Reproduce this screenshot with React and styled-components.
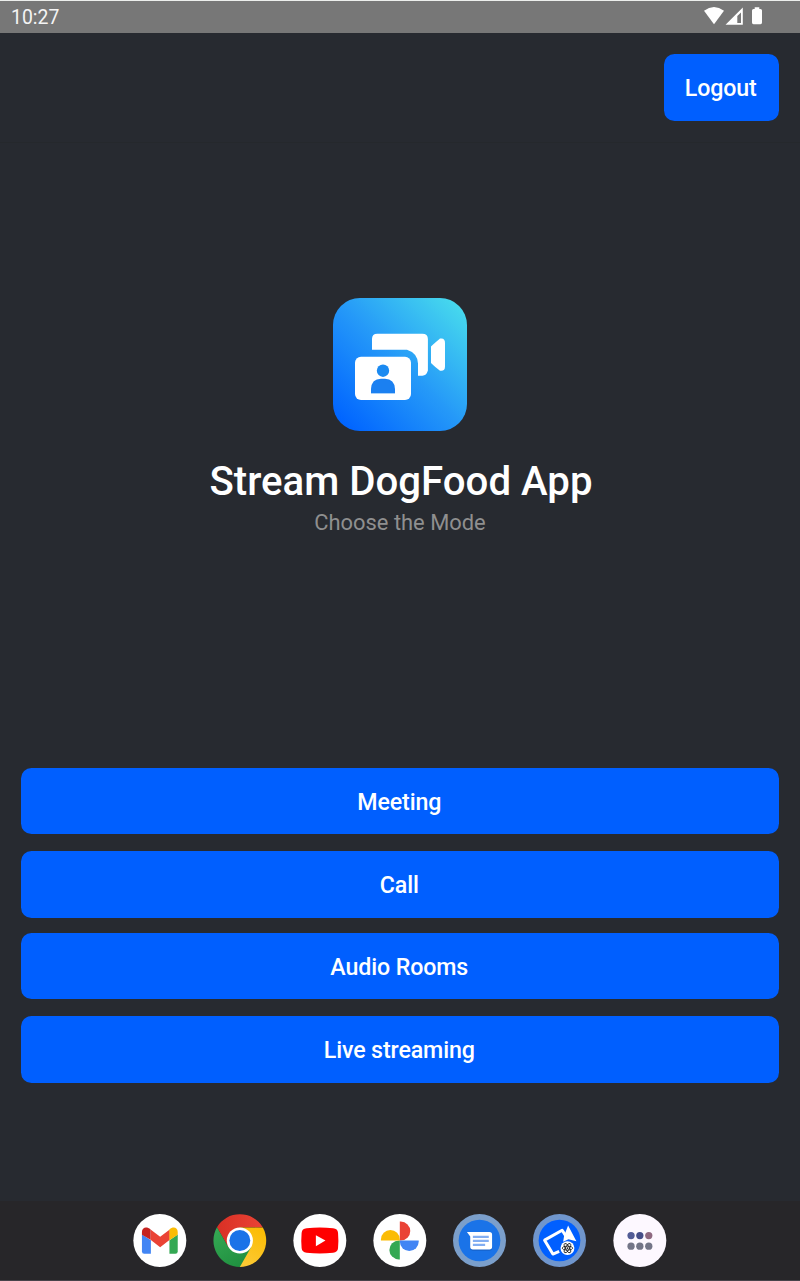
import React from "react";
import styled, { createGlobalStyle } from "styled-components";

const GlobalStyle = createGlobalStyle`
  * { box-sizing: border-box; }
  body { margin: 0; background: #272a30; font-family: Roboto, "Liberation Sans", sans-serif; }
`;

const Screen = styled.div`
  display: flex;
  flex-direction: column;
  width: 800px;
  height: 1281px;
  background: #272a30;
  color: #fff;
  overflow: hidden;
`;

const StatusBar = styled.div`
  display: flex;
  justify-content: space-between;
  flex: none;
  height: 33px;
  border-top: 1px solid #eceeec;
  padding: 0 36px 0 11px;
  background: #777;
`;

const Clock = styled.span`
  font-size: 19.4px;
  line-height: 33px;
  color: #f4f4f4;
`;

const StatusIcons = styled.svg`
  display: block;
  width: 60px;
  height: 20px;
  margin-top: 5px;
`;

const Header = styled.header`
  display: flex;
  flex: none;
  justify-content: flex-end;
  height: 110px;
  padding: 21px 21px 0 0;
  border-bottom: 1px solid #25282c;
`;

const Button = styled.button`
  display: flex;
  align-items: flex-start;
  justify-content: center;
  width: ${(p) => p.$width || "100%"};
  height: ${(p) => p.$height || "66px"};
  padding: 19px 1.5px 0 0;
  border: 0;
  border-radius: 10.5px;
  background: #005fff;
  color: #fff;
  font: 500 23.2px/31px Roboto, "Liberation Sans", sans-serif;
  letter-spacing: -0.12px;
`;

const Hero = styled.section`
  display: flex;
  flex-direction: column;
  align-items: center;
  flex: none;
  height: 625px;
  padding-top: 155px;
`;

const Logo = styled.svg`
  display: block;
  width: 134px;
  height: 133px;
`;

const Title = styled.h1`
  margin: 25px 0 0 2px;
  font-size: 40.2px;
  font-weight: 500;
  line-height: 52px;
`;

const Subtitle = styled.p`
  margin: 0;
  font-size: 21.9px;
  line-height: 30px;
  color: #8f8f8f;
`;

const Modes = styled.main`
  display: flex;
  flex-direction: column;
  flex: 1;
  padding: 0 21px;
`;

const ModeButton = styled(Button)`
  flex: none;
  margin-bottom: 17px;

  &:nth-child(even) {
    height: 67px;
    margin-bottom: 15px;
  }
`;

const Dock = styled.nav`
  display: flex;
  flex: none;
  justify-content: center;
  gap: 27px;
  height: 80px;
  padding: 13px 1px 0 0;
  border-bottom: 1px solid #47434a;
  background: #272629;
`;

const DockIcon = styled.svg.attrs({ viewBox: "-1 0 160 160" })`
  display: block;
  width: 53px;
  height: 53px;
  overflow: visible;
`;

function AppLogo() {
  return (
    <Logo viewBox="0 0 134 133" preserveAspectRatio="none">
      <defs>
        <linearGradient id="sky" x1="0.06" y1="0.94" x2="0.95" y2="0.05">
          <stop offset="0" stopColor="#0064ff" />
          <stop offset="0.5" stopColor="#2599f8" />
          <stop offset="1" stopColor="#47daed" />
        </linearGradient>
      </defs>
      <rect width="134" height="133" rx="27" fill="url(#sky)" />
      <path fill="#fff" d="M39 51.7V41q0-5.3 5.3-5.3h45q5.6 0 5.6 5.3v31.5q-1.5 5.2-5.5 5.2H85V65.5Q84.5 55 74 51.7Z" />
      <path fill="#fff" d="M98 48.5Q104 43 107 40.6Q112 39.5 112 45V68.5Q112 73.5 107 72.7Q103 70 98 65Z" />
      <rect x="22" y="58.7" width="56" height="43.3" rx="6" fill="#fff" />
      <circle cx="50" cy="72.7" r="6.2" fill="#1b8af1" />
      <path fill="#1b80f1" d="M38 95V91Q38.5 80.7 48 80.7H52Q61.5 81 62 91V95Z" />
      <path fill="#a9d2fb" d="M38 95h24v1H38z" />
    </Logo>
  );
}

function Gmail() {
  return (
    <DockIcon>
      <circle cx="80" cy="80" r="80" fill="#fff" />
      <path fill="#4285f4" d="M26 62L53 79V120H33Q26 120 26 113Z" />
      <path fill="#34a853" d="M109 79L134 62V113Q134 120 127 120H109Z" />
      <path fill="#ea4335" d="M52 47L81 69L110 47V78L81 100L52 78Z" />
      <path fill="#c5221f" d="M26 63V54C26 41 40 36 52 47V78L26 63Z" />
      <path fill="#fbbc04" d="M134 63V54C134 41 120 36 109 47V79Z" />
    </DockIcon>
  );
}

function Chrome() {
  return (
    <DockIcon>
      <defs>
        <linearGradient id="chromeRed" x2="1"><stop stopColor="#d93025" /><stop offset="1" stopColor="#ea4335" /></linearGradient>
        <linearGradient id="chromeGreen" x1="0.8" y1="1" x2="0.2" y2="0"><stop stopColor="#1e8e3e" /><stop offset="1" stopColor="#34a853" /></linearGradient>
        <linearGradient id="chromeYellow" x1="0.3" y1="1" x2="0.7" y2="0"><stop stopColor="#fcc934" /><stop offset="1" stopColor="#fbbc04" /></linearGradient>
      </defs>
      <path fill="url(#chromeRed)" d="M11 40A80 80 0 0 1 149 40L80 41V80L46 101Z" />
      <path fill="url(#chromeYellow)" d="M80 41H149.5A80 80 0 0 1 80 160L80 80Z" />
      <path fill="url(#chromeGreen)" d="M11 40A80 80 0 0 0 80 160L114 100L80 80L46 101Z" />
      <circle cx="80" cy="80" r="39.5" fill="#fff" />
      <circle cx="80" cy="80" r="31.5" fill="#1a73e8" />
    </DockIcon>
  );
}

function YouTube() {
  return (
    <DockIcon>
      <circle cx="80" cy="80" r="80" fill="#fff" />
      <path fill="#f00" d="M40 43Q80 39 120 43Q134 44 135 57Q137 80 135 103Q134 116 120 117Q80 121 40 117Q26 116 25 103Q23 80 25 57Q26 44 40 43Z" />
      <path fill="#fff" d="M68 64L97 80L68 97Z" />
    </DockIcon>
  );
}

function Photos() {
  return (
    <DockIcon>
      <circle cx="80" cy="80" r="80" fill="#fff" />
      <path fill="#ea4335" d="M80 23H83A28.5 28.5 0 0 1 83 80H80Z" />
      <path fill="#4285f4" d="M137 80V83A28.5 28.5 0 0 1 80 83V80Z" />
      <path fill="#34a853" d="M80 137H77A28.5 28.5 0 0 1 77 80H80Z" />
      <path fill="#fbbc04" d="M23 80V77A28.5 28.5 0 0 1 80 77V80Z" />
    </DockIcon>
  );
}

function Messages() {
  return (
    <DockIcon>
      <circle cx="79" cy="80" r="80" fill="#7b9fcb" />
      <circle cx="79" cy="80" r="63" fill="#1a73e8" />
      <path fill="#1559b8" opacity=".6" d="M51 66H117V104Q116 111 109 111H58Q51 110 51 104Z" />
      <path fill="#fff" d="M41 54H109Q117 54 117 62V99Q117 107 109 107H59Q51 107 51 99V68Z" />
      <path stroke="#82aef2" strokeWidth="6.5" d="M59 69H107M59 81H107M59 93H96" />
    </DockIcon>
  );
}

function StreamNative() {
  return (
    <DockIcon>
      <circle cx="79" cy="80" r="80" fill="#7096cd" />
      <circle cx="79" cy="80" r="63" fill="#005fff" />
      <path fill="none" stroke="#fff" strokeWidth="9" strokeLinejoin="round" d="M78 113L59 121L34 79L87 49L98 66" />
      <path fill="#fff" d="M105 35L130 82L106 76L90 84L93 66Z" />
      <circle cx="103" cy="103" r="21" fill="#fff" />
      <g fill="none" stroke="#222" strokeWidth="2.6">
        <ellipse cx="103" cy="103" rx="16" ry="6" />
        <ellipse cx="103" cy="103" rx="16" ry="6" transform="rotate(60 103 103)" />
        <ellipse cx="103" cy="103" rx="16" ry="6" transform="rotate(120 103 103)" />
      </g>
      <circle cx="103" cy="103" r="3" fill="#222" />
    </DockIcon>
  );
}

function AllApps() {
  return (
    <DockIcon>
      <circle cx="80" cy="80" r="80" fill="#fdf8ff" />
      <circle cx="53.5" cy="65" r="11" fill="#525c96" />
      <circle cx="80" cy="65" r="11" fill="#454e88" />
      <circle cx="107" cy="65" r="11" fill="#8e6880" />
      <circle cx="53.5" cy="97" r="11" fill="#737587" />
      <circle cx="80" cy="97" r="11" fill="#737587" />
      <circle cx="107" cy="97" r="11" fill="#737587" />
    </DockIcon>
  );
}

const modes = ["Meeting", "Call", "Audio Rooms", "Live streaming"];

export default function App() {
  return (
    <Screen>
      <GlobalStyle />
      <StatusBar>
        <Clock>10:27</Clock>
        <StatusIcons viewBox="0 0 60 20">
          <path fill="#fff" d="M0 4.7Q10 -2.7 20 4.7L10 18.3Z" />
          <path fill="#fff" fillRule="evenodd" d="M21.5 18.7L38.8 1.5V18.7ZM33.3 10V17H37V6.5Z" />
          <path fill="#fff" d="M50.7 1.3H55.3V3H56.5Q58 3 58 4.5V16.5Q58 18.3 56.5 18.3H49.5Q48 18.3 48 16.5V4.5Q48 3 49.5 3H50.7Z" />
        </StatusIcons>
      </StatusBar>
      <Header>
        <Button $width="115px" $height="67px">Logout</Button>
      </Header>
      <Hero>
        <AppLogo />
        <Title>Stream DogFood App</Title>
        <Subtitle>Choose the Mode</Subtitle>
      </Hero>
      <Modes>
        {modes.map((m) => (
          <ModeButton key={m}>{m}</ModeButton>
        ))}
      </Modes>
      <Dock>
        <Gmail />
        <Chrome />
        <YouTube />
        <Photos />
        <Messages />
        <StreamNative />
        <AllApps />
      </Dock>
    </Screen>
  );
}
